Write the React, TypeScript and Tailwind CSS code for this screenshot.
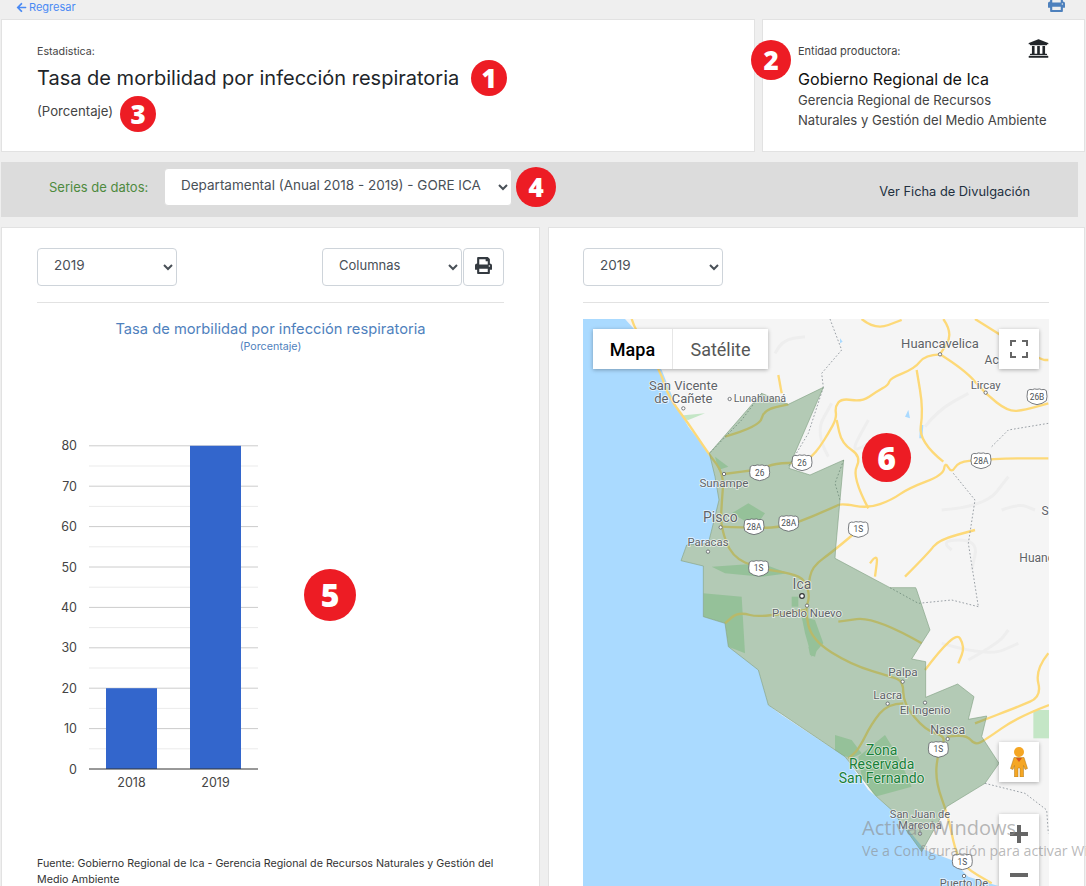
import { FaArrowLeft, FaPrint, FaUniversity } from 'react-icons/fa';

const Badge = ({ n, className }: { n: number; className: string }) => (
  <div className={`absolute flex items-center justify-center rounded-full bg-[#ed1c24] font-['Open_Sans',sans-serif] font-extrabold text-white ${className}`}>
    {n}
  </div>
);

const YearSelect = () => (
  <select className="h-[38px] w-[140px] rounded border border-[#ced4da] bg-white pb-[4px] pl-3 text-[13.5px] text-[#495057]">
    <option>2019</option>
  </select>
);

const majorTicks = [80, 70, 60, 50, 40, 30, 20, 10, 0];
const minorTicks = [75, 65, 55, 45, 35, 25, 15, 5];
const yFor = (v: number) => 338 - v * 4.04;

const BarChart = () => (
  <svg width="300" height="375" viewBox="0 0 300 375" className="block">
    {minorTicks.map((t) => (
      <line key={t} x1="52" x2="221" y1={yFor(t)} y2={yFor(t)} stroke="#ebebeb" />
    ))}
    {majorTicks.map((t) => (
      <g key={t}>
        {t > 0 && <line x1="52" x2="221" y1={yFor(t)} y2={yFor(t)} stroke="#cccccc" />}
        <text x="40" y={yFor(t) + 4.5} textAnchor="end" fontSize="12.500" fill="#444444">
          {t}
        </text>
      </g>
    ))}
    <rect x="69" y={yFor(20)} width="51" height={20 * 4.04} fill="#3366cc" />
    <rect x="153" y={yFor(80)} width="51" height={80 * 4.04} fill="#3366cc" />
    <line x1="52" x2="221" y1={yFor(0)} y2={yFor(0)} stroke="#333333" />
    <text x="94.5" y="356" textAnchor="middle" fontSize="12.500" fill="#444444">2018</text>
    <text x="178.5" y="356" textAnchor="middle" fontSize="12.500" fill="#444444">2019</text>
  </svg>
);

const water =
  '24,27 150,27 180,60 260,180 300,280 340,350 403,430 420,500 432,570 410,660 400,700 335,705 318,752 385,768 385,920 450,940 460,1010 550,1080 580,1185 620,1215 810,1340 880,1440 950,1500 1050,1620 1130,1650 1180,1700 1270,1728 24,1728';
const region =
  '745,232 640,283 560,250 403,430 420,500 432,570 410,660 400,700 335,705 318,752 385,768 385,920 450,940 460,1010 550,1080 580,1185 810,1340 905,1460 950,1500 1040,1625 1115,1490 1230,1420 1272,1360 1220,1280 1235,1218 1180,1228 1197,1160 1148,1122 1052,1162 1052,1055 1010,1047 1065,960 1025,840 1022,833 945,833 780,745 782,715 795,570 806,450 705,495 642,475 655,440';

const roads = [
  '1095,133 1050,135 1020,175 945,205 940,225 905,245 860,275 800,265 780,290 785,325 760,370 735,410 710,440 680,458 600,460 555,478 447,492',
  '170,27 180,60 255,180 280,260 340,340 400,430 447,492 440,580 437,650 470,740 550,775 650,790 690,810 705,860 690,900 710,990 830,1065 950,1100 985,1115 985,1180 1050,1260 1115,1280 1090,1320 1080,1410 1120,1520 1140,1620 1165,1670 1250,1720',
  '437,650 540,655 640,650 780,590 800,580 880,595 950,570 1000,535 1105,495 1110,455 1130,490 1150,455 1215,450 1300,445 1420,445',
  '1105,455 1030,395 1045,300 1025,180',
  '1095,133 1170,180 1230,250 1300,305 1350,300 1420,280',
  '880,595 830,500 860,440 800,400 785,330',
  '850,660 780,720 710,770 700,830',
  '1105,27 1135,70 1095,133',
  '1200,27 1300,90 1400,150 1420,150',
  '860,27 900,60 980,30',
  '1422,1185 1330,1220 1230,1290 1200,1305 1175,1275 1115,1280',
  '1420,1030 1380,1080 1400,1160 1330,1190 1200,1240',
  '1050,1080 1140,960 1170,1010 1150,1060',
  '985,1180 938,1181 890,1240 850,1320 820,1345',
  '1040,1000 900,920 790,935',
  '690,900 560,925 490,905 450,940',
  '990,800 1060,730 1090,690 1200,660',
  '885,760 910,725 900,800',
  '610,195 620,250',
  '450,380 555,350 565,300 640,283',
];

const borders = [
  '765,27 800,120 740,190 745,232',
  '745,232 700,370 640,470',
  '806,450 780,520 795,570',
  '945,833 1030,880 1130,870 1210,890',
  '1135,490 1200,570 1180,700 1210,890',
  '1250,410 1300,360 1420,340',
  '1230,1420 1350,1450 1415,1500 1420,1570',
  '560,250 500,330 403,430',
];

const terrain = [
  '1050,350 1090,300 1180,250',
  '1100,600 1230,590 1300,500',
  '600,130 620,90 690,80',
  '1180,1050 1270,1000 1300,960',
  '1100,1000 1240,1040 1330,1000',
  '880,400 820,440 880,330',
  '1130,720 1090,690 1210,690 1190,780',
  '760,440 720,370 770,280',
  '1280,600 1330,580 1380,600',
];

const parks = [
  '520,580 470,610 540,650 570,610',
  '410,770 560,760 640,790 560,800 450,790',
  '385,850 500,860 510,1030 460,1010 450,940 385,920',
  '680,920 720,930 745,1000 710,1040 690,970',
  '700,1010 725,1020 720,1040 705,1035',
  '780,1275 830,1290 860,1330 830,1345 780,1330',
  '850,1340 930,1275 970,1340 1010,1430 900,1460 860,1400',
  '420,440 460,470 430,480',
  '280,320 390,310 340,330',
  '1375,1200 1422,1200 1422,1285 1375,1285',
  '650,860 670,860 670,890 650,890',
];

const shields: [string, number, number][] = [
  ['26', 681, 458],
  ['26', 554, 488],
  ['28A', 1218, 452],
  ['26B', 1386, 260],
  ['1S', 850, 658],
  ['28A', 537, 650],
  ['28A', 641, 640],
  ['1S', 551, 775],
  ['1S', 1090, 1318],
  ['1S', 1162, 1655],
];

const dots = [
  [1095, 133], [325, 295], [464, 267], [1232, 248], [447, 492], [437, 652], [399, 725], [696, 887],
  [983, 1115], [938, 1181], [1050, 1178], [1118, 1287], [1035, 1571], [1167, 1698],
];

const labels: [string, number, number, number?][] = [
  ['Huancavelica', 1095, 115],
  ['Ac', 1250, 161, 36],
  ['Lircay', 1232, 236, 34],
  ['San Vicente', 325, 240],
  ['de Cañete', 325, 279],
  ['Lunahuaná', 555, 277, 32],
  ['Sunampe', 447, 530, 35],
  ['Pisco', 436, 636, 42],
  ['Paracas', 399, 709, 34],
  ['Ica', 681, 838, 42],
  ['Pueblo Nuevo', 696, 922, 34],
  ['Palpa', 984, 1099, 35],
  ['Lacra', 938, 1166, 35],
  ['El Ingenio', 1050, 1213, 35],
  ['Nasca', 1118, 1271, 37],
  ['San Juan de', 1035, 1525, 33],
  ['Marcona', 1035, 1558, 33],
  ['Puerto De', 1167, 1730, 33],
  ['Huanc', 1385, 755, 36],
  ['S', 1410, 615, 36],
];

// rounds a list of points through its midpoints so roads don't look like straight segments
const smooth = (pts: string) => {
  const p = pts.split(' ').map((s) => s.split(',').map(Number));
  let d = `M${p[0][0]} ${p[0][1]}`;
  for (let i = 1; i < p.length - 1; i++) {
    d += `Q${p[i][0]} ${p[i][1]} ${(p[i][0] + p[i + 1][0]) / 2} ${(p[i][1] + p[i + 1][1]) / 2}`;
  }
  const last = p[p.length - 1];
  return `${d}L${last[0]} ${last[1]}`;
};

const MapArt = () => (
  <svg viewBox="24 27 1398 1701" className="block h-[567px] w-[466px] font-[Roboto]">
    <rect x="24" y="27" width="1398" height="1701" fill="#f5f5f5" />
    {terrain.map((p) => (
      <path key={p} d={smooth(p)} fill="none" stroke="#eeeeee" strokeWidth="9" />
    ))}
    {parks.map((p) => (
      <polygon key={p} points={p} fill="#c4e6c6" />
    ))}
    <polygon points={water} fill="#aadaff" />
    <polygon points="1000,300 990,320 1005,325" fill="#aadaff" />
    <polygon points="1035,345 1045,345 1042,385 1033,385" fill="#aadaff" />
    <polygon points="795,85 803,95 795,100" fill="#aadaff" />
    {roads.map((p) => (
      <path key={p} d={smooth(p)} fill="none" stroke="#fdd978" strokeWidth="7" strokeLinejoin="round" />
    ))}
    {borders.map((p) => (
      <polyline key={p} points={p} fill="none" stroke="#9aa0a6" strokeWidth="3" strokeDasharray="5 6" />
    ))}
    <polygon points={region} fill="#4f8a55" fillOpacity="0.4" stroke="#7f9f80" strokeOpacity="0.6" strokeWidth="3" />
    {shields.map(([t, x, y], i) => (
      <g key={i}>
        <path
          d={`M${x - 28} ${y - 18}q6 -6 14 -3q6 -4 14 -1q8 -3 14 1q8 -3 14 3q4 20 0 30q-12 10 -28 12q-16 -2 -28 -12q-4 -10 0 -30z`}
          fill="#ffffff"
          stroke="#5f6368"
          strokeWidth="2.5"
        />
        <text x={x} y={y + 9} textAnchor="middle" fontSize="25" fill="#4a4f54">
          {t}
        </text>
      </g>
    ))}
    {dots.map(([x, y]) => (
      <circle key={`${x}-${y}`} cx={x} cy={y} r="5" fill="#ffffff" stroke="#5f6368" strokeWidth="2.5" />
    ))}
    <circle cx="681" cy="858" r="7" fill="#ffffff" stroke="#333333" strokeWidth="3.5" />
    {labels.map(([t, x, y, s]) => (
      <text key={t} x={x} y={y} textAnchor="middle" fontSize={s ?? 39} fill="#5f6368" stroke="#ffffff" strokeOpacity="0.7" strokeWidth="5" paintOrder="stroke">
        {t}
      </text>
    ))}
    <g fontSize="42" fill="#188038" stroke="#ffffff" strokeOpacity="0.6" strokeWidth="5" paintOrder="stroke" textAnchor="middle">
      <text x="920" y="1336">Zona</text>
      <text x="920" y="1378">Reservada</text>
      <text x="920" y="1420">San Fernando</text>
    </g>
  </svg>
);

const MapControls = () => (
  <>
    <div className="absolute left-[10px] top-[10px] flex h-10 bg-white font-[Roboto] text-[18px] shadow-[0_1px_4px_rgba(0,0,0,0.3)]">
      <div className="flex w-[80px] items-center justify-center border-r border-[#e6e6e6] font-medium text-black">Mapa</div>
      <div className="flex w-[95px] items-center justify-center text-[#565656]">Satélite</div>
    </div>
    <div className="absolute left-[416px] top-[10px] flex h-10 w-10 items-center justify-center bg-white shadow-[0_1px_4px_rgba(0,0,0,0.3)]">
      <svg width="18" height="18" viewBox="0 0 18 18" fill="none" stroke="#666666" strokeWidth="2">
        <path d="M1 6V1h5M12 1h5v5M17 12v5h-5M6 17H1v-5" />
      </svg>
    </div>
    <div className="absolute left-[416px] top-[423px] flex h-10 w-10 items-center justify-center bg-white shadow-[0_1px_4px_rgba(0,0,0,0.3)]">
      <svg width="18" height="30" viewBox="0 0 18 30">
        <circle cx="9" cy="5" r="5" fill="#f5a623" />
        <path d="M4 10.5h10l3.5 11-2.5 1-1.5-4v11.5H10V21H8v9H4.5V18.500l-1.500 4-2.500-1z" fill="#f5a623" stroke="#a8741a" strokeWidth="0.5" />
        <path d="M6 11l3 4 3-4z" fill="#d9531e" />
      </svg>
    </div>
    <div className="absolute left-[416px] top-[495px] h-[81px] w-10 bg-white shadow-[0_1px_4px_rgba(0,0,0,0.3)]">
      <svg width="40" height="81" viewBox="0 0 40 81" fill="#666666">
        <path d="M18 11h4v7h7v4h-7v7h-4v-7h-7v-4h7z" />
        <rect x="11" y="59" width="18" height="4" />
      </svg>
    </div>
  </>
);

export default function App() {
  return (
    <div className="relative h-[886px] w-[1086px] overflow-hidden bg-[#efefef] pl-px font-[Inter,sans-serif] text-[#212529]">
      {/* top links */}
      <div className="flex h-[19px] items-end justify-between overflow-hidden">
        <a className="mb-[6px] ml-[15px] flex items-center gap-[2px] text-[11px] leading-none text-[#4a8af4]">
          <FaArrowLeft className="text-[11px]" />
          Regresar
        </a>
        <FaPrint className="mb-[7px] mr-[21px] shrink-0 text-[17px] text-[#4e81bd]" />
      </div>

      {/* statistic + entity */}
      <div className="flex gap-[7px]">
        <section className="h-[133px] w-[754px] border border-[#e2e2e2] bg-white pl-[35px] pt-[25px]">
          <p className="text-[10.7px] leading-[13px] text-[#444444]">Estadistica:</p>
          <h1 className="mt-[6px] text-[20px] leading-[28px] text-[#212529]">Tasa de morbilidad por infección respiratoria</h1>
          <p className="mt-[9px] text-[13.2px] leading-[20px] text-[#444444]">(Porcentaje)</p>
        </section>
        <section className="relative h-[133px] w-[323px] border border-[#e2e2e2] bg-white pl-[35px] pt-[25px]">
          <p className="text-[11px] leading-[13px] text-[#444444]">Entidad productora:</p>
          <FaUniversity className="absolute right-[35px] top-[18px] text-[21px] text-[#212529]" />
          <h2 className="mt-[9px] text-[16.1px] leading-[24px] text-[#111111]">Gobierno Regional de Ica</h2>
          <p className="mt-0 text-[13.1px] leading-[19.500px] text-[#444444]">
            Gerencia Regional de Recursos
            <br />
            Naturales y Gestión del Medio Ambiente
          </p>
        </section>
      </div>

      {/* data series */}
      <div className="mt-[10px] flex h-[55px] w-[1077px] items-start bg-[#dcdcdc] pl-[48px] pt-[6px]">
        <span className="mt-[10px] w-[115px] text-[13px] text-[#4e8a3e]">Series de datos:</span>
        <select className="h-[38px] w-[348px] rounded border border-[#dcdcdc] bg-white pb-[4px] pl-3 text-[13.5px] text-[#495057]">
          <option>Departamental (Anual 2018 - 2019) - GORE ICA</option>
        </select>
        <a className="ml-auto mr-[48px] mt-[14px] text-[12.85px] text-[#22303f]">Ver Ficha de Divulgación</a>
      </div>

      {/* panels */}
      <div className="mt-[10px] flex gap-[8px]">
        <section className="h-[700px] w-[539px] border border-[#e2e2e2] bg-white px-[35px] pt-[20px]">
          <div className="flex border-b border-[#e2e2e2] pb-[16px]">
            <YearSelect />
            <select className="ml-auto h-[38px] w-[140px] rounded border border-[#ced4da] bg-white pb-[4px] pl-3 text-[13px] text-[#495057]">
              <option>Columnas</option>
            </select>
            <button className="ml-px flex h-[38px] w-[41px] items-start justify-center rounded border border-[#ced4da] pt-[8px] text-[#343a40]">
              <FaPrint className="text-[17px]" />
            </button>
          </div>
          <div className="pt-[16px] text-center text-[#4f81bd]">
            <h3 className="text-[14.7px] leading-[20px]">Tasa de morbilidad por infección respiratoria</h3>
            <p className="text-[10.7px] leading-[16px]">(Porcentaje)</p>
          </div>
          <div className="pt-[76px]">
            <BarChart />
          </div>
          <p className="mt-[50px] text-[10.7px] leading-[16px] text-[#333333]">
            Fuente: Gobierno Regional de Ica - Gerencia Regional de Recursos Naturales y Gestión del
            <br />
            Medio Ambiente
          </p>
        </section>
        <section className="h-[700px] w-[537px] border border-[#e2e2e2] bg-white pl-[34px] pr-[35px] pt-[20px]">
          <div className="border-b border-[#e2e2e2] pb-[16px]">
            <YearSelect />
          </div>
          <div className="relative mt-[16px] h-[567px] w-[466px] overflow-hidden">
            <MapArt />
            <MapControls />
          </div>
        </section>
      </div>

      {/* annotation badges */}
      <Badge n={1} className="left-[471px] top-[60px] h-9 w-9 text-[26px]" />
      <Badge n={2} className="left-[751px] top-[40px] h-10 w-10 text-[26px]" />
      <Badge n={3} className="left-[120px] top-[96px] h-9 w-9 text-[26px]" />
      <Badge n={4} className="left-[516px] top-[167px] h-10 w-10 text-[26px]" />
      <Badge n={5} className="left-[304px] top-[569px] h-[52px] w-[52px] text-[32px]" />
      <Badge n={6} className="left-[862px] top-[433px] h-[49px] w-[49px] text-[32px]" />

      {/* windows activation watermark */}
      <div className="pointer-events-none absolute left-[862px] top-[815px] w-[260px] whitespace-nowrap font-['Open_Sans',sans-serif] text-[#8a8a8a]/60">
        <p className="text-[20px] leading-[26px]">Activar Windows</p>
        <p className="text-[14.2px] leading-[20px]">Ve a Configuración para activar Windows</p>
      </div>
    </div>
  );
}
